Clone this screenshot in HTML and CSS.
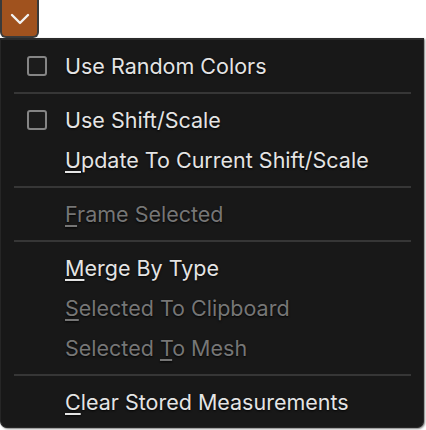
FILE: index.html
```html
<!DOCTYPE html>
<html>
<head>
<meta charset="utf-8">
<link rel="stylesheet" href="styles.css">
</head>
<body>
<div class="page">
  <div class="toggle">
    <svg class="chev" width="20" height="12" viewBox="0 0 20 12"><path d="M2 2 L10 10 L18 2" fill="none" stroke="#f2f2f2" stroke-width="2.4" stroke-linecap="round" stroke-linejoin="round"/></svg>
  </div>
  <div class="menu">
    <div class="item"><span class="check"></span><span class="label">Use Random Colors</span></div>
    <div class="sep"></div>
    <div class="item"><span class="check"></span><span class="label">Use Shift/Scale</span></div>
    <div class="item"><span class="label"><u>U</u>pdate To Current Shift/Scale</span></div>
    <div class="sep"></div>
    <div class="item disabled"><span class="label"><u>F</u>rame Selected</span></div>
    <div class="sep"></div>
    <div class="item"><span class="label"><u>M</u>erge By Type</span></div>
    <div class="item disabled"><span class="label"><u>S</u>elected To Clipboard</span></div>
    <div class="item disabled"><span class="label">Selected <u>T</u>o Mesh</span></div>
    <div class="sep"></div>
    <div class="item"><span class="label"><u>C</u>lear Stored Measurements</span></div>
  </div>
</div>
</body>
</html>
```
FILE: styles.css
```css
html, body {
  margin: 0;
  padding: 0;
  background: #ffffff;
}
.page {
  width: 426px;
  height: 430px;
  overflow: hidden;
  font-family: Inter, "Noto Sans", sans-serif;
}
.toggle {
  box-sizing: border-box;
  width: 39px;
  height: 38px;
  margin-left: 0;
  background: #a0521e;
  border: 2px solid #3a3a3a;
  border-top: none;
  border-radius: 0 0 6px 6px;
  display: flex;
  align-items: center;
  justify-content: center;
}
.chev {
  display: block;
  margin-top: 2px;
}
.menu {
  box-sizing: border-box;
  width: 424px;
  height: 390px;
  background: #181818;
  border: 1px solid #262626;
  border-top: 2px solid #2a2a2a;
  border-radius: 0 0 7px 7px;
  padding: 6px 0 7px;
  box-shadow: 1px 1px 2px rgba(0,0,0,0.5);
  display: flex;
  flex-direction: column;
}
.item {
  height: 40px;
  flex: none;
  display: flex;
  align-items: center;
  padding-left: 64px;
  position: relative;
  color: #e4e4e4;
  font-size: 21.5px;
  text-shadow: 0 1px 2px rgba(0,0,0,0.9);
}
.item.disabled {
  color: #767676;
}
.check {
  position: absolute;
  left: 26px;
  top: 10px;
  box-sizing: border-box;
  width: 20px;
  height: 20px;
  border: 2px solid #858585;
  border-radius: 3px;
  background: #1c1c1c;
}
.label u {
  text-decoration-thickness: 2px;
  text-underline-offset: 3px;
}
.sep {
  flex: none;
  height: 14px;
  margin: 0 12px 0 13px;
  display: flex;
  align-items: center;
}
.sep::before {
  content: "";
  display: block;
  width: 100%;
  height: 2px;
  background: #363636;
}
```
